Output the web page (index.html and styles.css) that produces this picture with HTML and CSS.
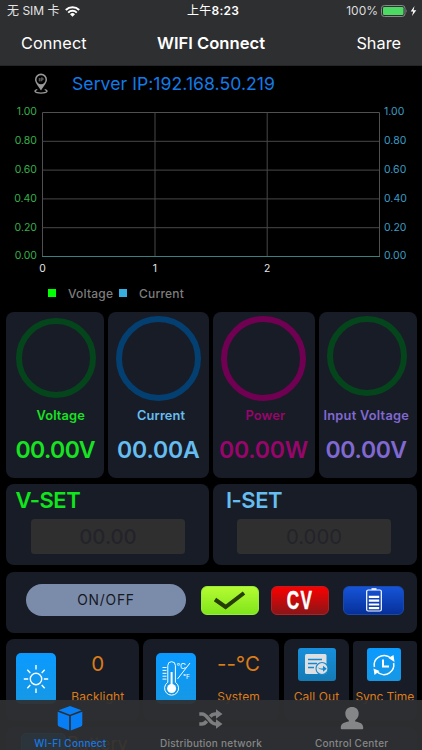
FILE: index.html
```html
<!DOCTYPE html>
<html lang="en">
<head>
<meta charset="utf-8">
<title>WIFI Connect</title>
<link rel="stylesheet" href="styles.css">
</head>
<body>
<div class="app">
  <header class="top">
    <div class="status">
      <div class="carrier"><span>无 SIM 卡</span>
        <svg width="15" height="11" viewBox="0 0 15 11"><g fill="none" stroke="#fff" stroke-width="2"><path d="M.8 4a9.6 9.6 0 0 1 13.4 0"/><path d="M3.2 6.6a6.2 6.2 0 0 1 8.6 0"/></g><path d="M7.5 10.8 5 8.3a3.6 3.6 0 0 1 5 0z" fill="#fff"/></svg>
      </div>
      <div class="clock">上午<b>8:23</b></div>
      <div class="power"><span>100%</span>
        <svg width="37" height="12" viewBox="0 0 37 12"><rect x=".5" y=".5" width="23.5" height="11" rx="2.8" fill="none" stroke="#85888a"/><rect x="2" y="2" width="20.5" height="8" rx="1.3" fill="#4cd964"/><path d="M25.2 4.2q1.4 1.8 0 3.6z" fill="#85888a"/><path d="M33.5 1 29.7 6.6h2.5L31 11l4.3-5.8h-2.8z" fill="#fff"/></svg>
      </div>
    </div>
    <nav class="nav"><span class="nav-l">Connect</span><strong>WIFI Connect</strong><span class="nav-r">Share</span></nav>
  </header>

  <main class="content">
    <div class="server">
      <svg width="14" height="21" viewBox="0 0 14 21"><path fill="#999" fill-rule="evenodd" d="M7 .4a6 6 0 0 1 6 6c0 3.400-3.500 6.600-6 11.100C4.500 13 1 9.800 1 6.400a6 6 0 0 1 6-6zM7 2.200a4.500 4.500 0 1 0 0 9 4.500 4.500 0 0 0 0-9z"/><path d="M5.300 5v3.400M7 8.400V5h1q1.300 0 1.300 1T8 7H7" fill="none" stroke="#888" stroke-width=".8"/><path d="M3.300 16.500C-.3 17.600.1 20.100 7 20.100s7.300-2.500 3.700-3.600" fill="none" stroke="#999" stroke-width="1.300"/></svg>
      <span class="ip">Server IP:192.168.50.219</span>
    </div>

    <section class="chart">
      <div class="axis volts"><span>1.00</span><span>0.80</span><span>0.60</span><span>0.40</span><span>0.20</span><span>0.00</span></div>
      <svg class="plot" width="338" height="146" viewBox="0 0 338 146">
        <g fill="none" stroke="#505050"><path d="M.5.500H337.500V145M.5.500V145"/><path stroke="#484848" d="M.5 29.300H337M.5 58.100H337M.5 86.900H337M.5 115.700H337M113 .5V145M225.200.5V145"/></g>
        <path d="M0 144.500H338" stroke="#398080"/>
      </svg>
      <div class="axis amps"><span>1.00</span><span>0.80</span><span>0.60</span><span>0.40</span><span>0.20</span><span>0.00</span></div>
      <div class="ticks"><span>0</span><span>1</span><span>2</span></div>
    </section>
    <div class="legend"><i class="green"></i><span class="lv">Voltage</span><i class="blue"></i><span>Current</span></div>

    <section class="gauges">
      <div class="card gauge g-volt"><div class="ring"></div><div class="label">Voltage</div><div class="value">00.00V</div></div>
      <div class="card gauge g-cur"><div class="ring"></div><div class="label">Current</div><div class="value">00.00A</div></div>
      <div class="card gauge g-pow"><div class="ring"></div><div class="label">Power</div><div class="value">00.00W</div></div>
      <div class="card gauge g-in"><div class="ring"></div><div class="label">Input Voltage</div><div class="value">00.00V</div></div>
    </section>

    <section class="sets">
      <div class="card set set-v"><h2>V-SET</h2><div class="field">00.00</div></div>
      <div class="card set set-i"><h2>I-SET</h2><div class="field">0.000</div></div>
    </section>

    <section class="card switches">
      <div class="onoff">ON/OFF</div>
      <div class="pill check"><svg width="34" height="22" viewBox="0 0 34 22"><path d="M2 10.500 12.600 18 31 4" fill="none" stroke="#263d04" stroke-width="4"/></svg></div>
      <div class="pill cv"><span>CV</span></div>
      <div class="pill batt"><svg width="16" height="24" viewBox="0 0 16 24"><rect x=".7" y="2" width="14.600" height="21" rx="1.500" fill="none" stroke="#fff" stroke-width="1.200"/><path d="M5.500 1h5" stroke="#fff" stroke-width="1.600"/><path d="M2.800 8.900h10.400M2.800 12.700h10.400M2.800 16.500h10.400M2.800 20.200h10.400" stroke="#fff" stroke-width="2.200"/></svg></div>
    </section>

    <section class="tools">
      <div class="card tool wide t1">
        <div class="tile"><svg width="26" height="30" viewBox="0 0 26 30"><g fill="none" stroke="#fff" stroke-width="1.400"><circle cx="13" cy="15" r="5.700"/><path d="M13 1v4.500M13 24.500V29M.8 15h4.400M20.800 15h4.400M4.300 5.700l3 3.200M21.700 5.700l-3 3.200M4.300 24.300l3-3.200M21.700 24.300l-3-3.200"/></g></svg></div>
        <div class="info"><div class="num">0</div><div class="name">Backlight</div></div>
      </div>
      <div class="card tool wide t2">
        <div class="tile"><svg width="30" height="38" viewBox="0 0 30 38"><g fill="none" stroke="#fff" stroke-width="1"><path d="M6.800 22.300V5.500a3.800 3.800 0 0 1 7.600 0v16.800a7 7 0 1 1-7.600 0z"/><path d="M1.500 7.500h4M1.500 10.400h4M1.500 13.300h4M1.500 16.200h4M1.500 19.100h4M29 3 16.500 19"/></g><path d="M10.600 12v15" stroke="#fff" stroke-width="2"/><circle cx="10.600" cy="28.500" r="4.500" fill="#fff"/><text x="15.500" y="9" class="deg">°C</text><text x="22" y="19" class="deg small">°F</text></svg></div>
        <div class="info"><div class="num">--°C</div><div class="name">System</div></div>
      </div>
      <div class="card tool t3">
        <div class="tile square dim"><svg width="26" height="24" viewBox="0 0 26 24"><rect x="1" y="1" width="21.500" height="20" rx="1.500" fill="#dedfe0"/><path d="M4 6.500h14M4 10.500h9M4 14.500h6" stroke="#1589cf" stroke-width="1.500"/><circle cx="18" cy="15.500" r="6" fill="#dedfe0" stroke="#1589cf" stroke-width="1.100"/><path d="M13.500 14q2.500 2.200 5.500 1.200v-2.400l3.800 3-3.800 3v-2q-3.500.5-5.500-2.800z" fill="#1589cf"/></svg></div>
        <div class="name">Call Out</div>
      </div>
      <div class="card tool t4">
        <div class="tile square"><svg width="24" height="24" viewBox="0 0 24 24"><g fill="none" stroke="#fff"><path d="M6.500 4.200A9.600 9.600 0 0 1 18.500 4.800M2.400 14A9.600 9.600 0 0 1 6.500 4.200M17.500 19.800A9.600 9.600 0 0 1 5 18.800M21.600 10A9.600 9.600 0 0 1 17.500 19.800" stroke-width="1.500"/><path d="M11 6.500v7h6" stroke-width="2"/></g><path d="M16.500 5 21.500 2l1 7zM1.500 15.500l6 2.500-5 4z" fill="#fff"/></svg></div>
        <div class="name">Sync Time</div>
      </div>
    </section>
    <section class="card battery"><div class="battery-icon"></div><span>Battery</span></section>
  </main>

  <footer class="tabs">
    <div class="tab active"><svg width="26" height="25" viewBox="0 0 26 25"><path fill="#087ef5" d="m13 0 11.500 4.200L13 8.800 1.500 4.200zM.7 5.800 12.200 10v14.500L2 20.500Q.7 20 .7 18.600zM25.300 5.800 13.800 10v14.500L24 20.500q1.300-.5 1.300-1.900z"/></svg><span>WI-FI Connect</span></div>
    <div class="tab mid"><svg width="24" height="20" viewBox="0 0 24 20"><g fill="none" stroke="#7c7d7e" stroke-width="3.600"><path d="M.3 5H3c6 0 7.500 10 13.500 10H18"/><path d="M.3 15H3c2 0 3.500-1.200 4.700-2.800M11.200 7.500C12.500 6 14 5 16 5h2"/></g><path d="M17 .2 23.500 5 17 9.800zM17 10.200l6.500 4.800-6.500 4.800z" fill="#7c7d7e"/></svg><span>Distribution network</span></div>
    <div class="tab"><svg width="24" height="24" viewBox="0 0 24 24"><path fill="#858687" d="M12 1c4 0 6.700 2.700 6.700 6.500 0 3-1.500 5.500-3.500 6.800v1.200c4.500.7 8 2.200 8 6v1q0 .8-.8.8H1.600q-.8 0-.8-.8v-1c0-3.800 3.500-5.300 8-6v-1.200c-2-1.300-3.500-3.800-3.500-6.800C5.300 3.700 8 1 12 1z"/></svg><span>Control Center</span></div>
  </footer>
</div>
</body>
</html>
```
FILE: styles.css
```css
* { box-sizing: border-box; }
body { margin: 0; background: #000; font-family: Inter, "Noto Sans CJK SC", sans-serif; }
svg { display: block; flex: none; }
.app { position: relative; width: 422px; height: 750px; overflow: hidden; background: #000; }

.top { height: 66px; background: #2e2f31; border-bottom: 1px solid #242527; color: #fff; }
.status { height: 22px; display: grid; grid-template-columns: 1fr 60px 1fr; align-items: center; font-size: 12px; line-height: 22px; }
.carrier { display: flex; align-items: center; gap: 5px; padding-left: 7px; color: #e4e4e4; }
.carrier span { white-space: nowrap; }
.clock { white-space: nowrap; padding-left: 6px; letter-spacing: .25px; }
.clock b { font-weight: 600; }
.power { display: flex; align-items: center; justify-content: flex-end; gap: 3px; padding-right: 4px; color: #ddd; }
.nav { display: grid; grid-template-columns: 1fr 120px 1fr; height: 43px; line-height: 43px; font-size: 16.3px; }
.nav strong { font-weight: 600; text-align: center; white-space: nowrap; font-size: 16.600px; }
.nav-l { padding-left: 21px; letter-spacing: .1px; }
.nav-r { text-align: right; padding-right: 21px; }

.server { display: flex; height: 39px; align-items: flex-start; padding: 7px 0 0 34px; }
.ip { margin-left: 24px; color: #127be6; font-size: 17.6px; line-height: 21px; white-space: nowrap; letter-spacing: .05px; }

.chart { display: grid; grid-template-columns: 42px 338px 42px; grid-template-rows: 159px 16px; height: 175px; }
.plot { margin-top: 7px; }
.axis { display: flex; flex-direction: column; font-size: 10.5px; line-height: 28.8px; height: 173px; margin-top: -6.600px; }
.volts { color: #35b04a; text-align: right; padding-right: 5px; }
.amps { color: #3a9cc4; padding-left: 4px; }
.ticks { grid-column: 2; display: flex; color: #e6e6e6; font-size: 10.300px; line-height: 16px; margin-left: -5.500px; height: 16px; margin-top: -4px; }
.ticks span { width: 12px; margin-right: 100.300px; text-align: center; }
.legend { display: flex; align-items: center; height: 26px; padding-left: 48px; color: #7d7d7d; font-weight: 500; font-size: 12px; letter-spacing: .2px; }
.legend i { width: 8px; height: 8px; margin-top: -1px; }
.legend span { margin-left: 12px; }
.legend .lv { width: 51px; }
.green { background: #0f0; }
.blue { background: #35aee0; }

.card { background: #181c27; border-radius: 8px; }
.gauges { display: grid; grid-template-columns: 98px 101.500px 101.500px 98.500px; gap: 4px; padding: 6px 0 0 5.500px; }
.gauge { height: 165.500px; white-space: nowrap; }
.ring { width: 80px; height: 80px; border: 6.300px solid #04451c; border-radius: 50%; }
.label { font-size: 12.800px; line-height: 18px; font-weight: 600; letter-spacing: .15px; }
.value { font-size: 23px; line-height: 28px; font-weight: 600; margin-top: 11px; letter-spacing: -.6px; }
.gauge { padding-top: 6px; }
.g-volt { color: #18e322; }
.g-volt .ring { margin: 0 0 9px 10px; }
.g-volt .label { margin-left: 31px; }
.g-volt .value { margin-left: 10px; }
.g-cur, .g-pow { padding-top: 4px; }
.g-cur .ring, .g-pow .ring { width: 85px; height: 85px; margin: 0 0 6px 8px; }
.g-cur { color: #66bdef; }
.g-cur .ring { border-color: #033f70; }
.g-cur .label { margin-left: 29.500px; }
.g-cur .value { margin-left: 9.500px; letter-spacing: -.15px; }
.g-pow { color: #98056b; }
.g-pow .ring { border-color: #6f0052; }
.g-pow .label { margin-left: 32.500px; }
.g-pow .value { margin-left: 6px; letter-spacing: -.2px; }
.g-in { padding-top: 4px; color: #8169d2; }
.g-in .ring { margin: 0 0 11px 8px; }
.g-in .label { margin-left: 5px; letter-spacing: .25px; }
.g-in .value { margin-left: 7px; letter-spacing: -.3px; }

.sets { display: flex; gap: 4px; padding: 6.500px 0 0 5.500px; }
.set { width: 203.500px; height: 81px; padding-top: 3px; }
.set h2 { margin: 0 0 5px 10px; font-size: 22px; line-height: 27px; font-weight: 600; letter-spacing: -.5px; }
.set-v h2 { color: #0fe61c; }
.set-i h2 { color: #66bdef; margin-left: 13px; }
.field { width: 154px; height: 35px; margin-left: 25.500px; border-radius: 3.500px; background: #2f2f2f; color: #23232a; text-align: center; font-size: 20.300px; line-height: 35px; font-weight: 500; }
.set-i .field { margin-left: 24px; font-weight: 400; }

.switches { display: flex; width: 411px; height: 61px; margin: 6.500px 0 0 5.500px; padding: 12.500px 0 0 20.500px; }
.onoff { width: 160px; height: 32px; border-radius: 16px; background: #7b8baa; color: #15181f; text-align: center; font-size: 13.800px; line-height: 33px; letter-spacing: .8px; }
.pill { display: flex; align-items: center; justify-content: center; width: 58px; height: 29px; margin-top: 1.500px; border-radius: 6px; }
.check { margin-left: 15px; background: linear-gradient(#b5fb32, #80e51b); border: 1px solid #97ec39; }
.cv { margin-left: 12px; background: linear-gradient(#fb0000, #8a1518); border: 1px solid #b42024; color: #fff; font: 700 26px/29px "Liberation Sans", sans-serif; }
.cv span { transform: scaleX(.66); letter-spacing: 2px; -webkit-text-stroke: .5px #fff; }
.batt { margin-left: 14px; width: 61px; background: linear-gradient(#1654d7, #06309a); border: 1px solid #194aaa; }

.tools { display: flex; padding: 6.500px 0 0 5.500px; color: #dc7c18; white-space: nowrap; }
.tool { height: 82px; }
.wide { display: flex; padding: 14px 0 0 10px; }
.t1 { width: 133.500px; }
.t2 { width: 136px; margin-left: 4px; padding-left: 13px; }
.t3 { width: 65px; margin-left: 5px; padding-top: 9px; }
.t4 { width: 63.500px; height: 80px; margin: 2px 0 0 4px; padding-top: 7px; border-radius: 4px 4px 8px 8px; }
.tile { display: flex; flex: none; align-items: center; justify-content: center; width: 40px; height: 51px; border-radius: 5px; background: linear-gradient(#0a9aff, #1698e4); }
.square { width: 34px; height: 33px; margin: 0 auto 0 13.500px; border-radius: 3px; }
.t3 .tile { width: 38px; }
.dim { background: linear-gradient(#178fdc, #147bb5); }
.info { width: 84px; margin-left: 1px; text-align: center; }
.t2 .info { margin-left: 2px; }
.num { font-size: 20.500px; line-height: 25px; margin-top: -2px; }
.name { font-size: 12px; line-height: 16px; text-align: center; letter-spacing: .1px; }
.info .name { margin-top: 13px; }
.square + .name { margin-top: 8px; }
.t4 .name { letter-spacing: -.15px; }
.deg { font-size: 8px; fill: #fff; }
.deg.small { font-size: 6.500px; }
.battery { display: flex; width: 411px; height: 80px; margin: 6px 0 0 5.500px; padding: 6px 0 0 15.500px; color: #dc7c18; font-size: 18px; }
.battery-icon { width: 45px; height: 50px; border: 1px solid #0a9aff; border-radius: 5px; background: #0a70cc; }
.battery span { margin-left: 1px; }

.tabs { position: absolute; inset: 700px 0 0; display: grid; grid-template-columns: repeat(3, 1fr); background: rgba(47, 48, 50, .94); font-size: 10px; font-weight: 500; letter-spacing: .25px; color: #858687; }
.tab { display: flex; flex-direction: column; align-items: center; padding-top: 6px; }
.tab span { white-space: nowrap; margin-top: auto; line-height: 14px; }
.tab.active { color: #1479e3; }
.mid svg { margin-top: 3px; }
```
